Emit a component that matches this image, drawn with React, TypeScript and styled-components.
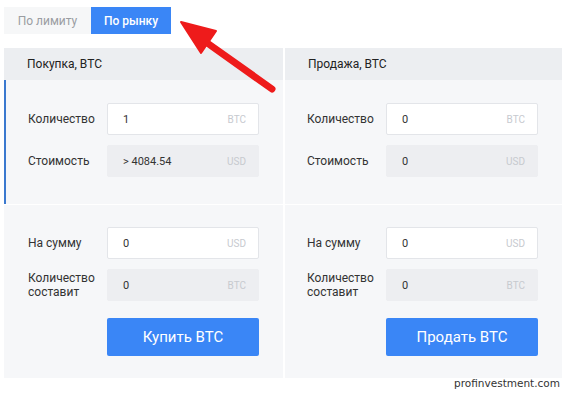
import React from 'react';
import styled, { createGlobalStyle } from 'styled-components';

const GlobalStyle = createGlobalStyle`
  html, body {
    margin: 0;
    padding: 0;
    background: #ffffff;
  }
  body {
    font-family: Roboto, "Noto Sans", "Liberation Sans", sans-serif;
    color: #2b2b2b;
  }
`;

interface Field {
  label: string;
  value: string;
  unit: string;
  disabled?: boolean;
}

interface Side {
  title: string;
  top: Field[];
  bottom: Field[];
  action: string;
  active?: boolean;
}

const sides: Side[] = [
  {
    title: 'Покупка, BTC',
    active: true,
    top: [
      { label: 'Количество', value: '1', unit: 'BTC' },
      { label: 'Стоимость', value: '> 4084.54', unit: 'USD', disabled: true },
    ],
    bottom: [
      { label: 'На сумму', value: '0', unit: 'USD' },
      { label: 'Количество составит', value: '0', unit: 'BTC', disabled: true },
    ],
    action: 'Купить BTC',
  },
  {
    title: 'Продажа, BTC',
    top: [
      { label: 'Количество', value: '0', unit: 'BTC' },
      { label: 'Стоимость', value: '0', unit: 'USD', disabled: true },
    ],
    bottom: [
      { label: 'На сумму', value: '0', unit: 'USD' },
      { label: 'Количество составит', value: '0', unit: 'BTC', disabled: true },
    ],
    action: 'Продать BTC',
  },
];

const App = () => {
  return (
    <Page>
      <GlobalStyle />
      <Tabs>
        <Tab>По лимиту</Tab>
        <Tab isActive>По рынку</Tab>
      </Tabs>

      <Panel>
        {sides.map((side) => (
          <Column key={side.title}>
            <ColumnHeader>{side.title}</ColumnHeader>
            <Section isActive={side.active} hasAccent={side.active}>
              {side.top.map((f) => (
                <FieldRow key={f.label} field={f} />
              ))}
            </Section>
            <Section isBottom hasAccent={side.active}>
              {side.bottom.map((f) => (
                <FieldRow key={f.label} field={f} />
              ))}
              <ActionRow>
                <Spacer />
                <ActionButton>{side.action}</ActionButton>
              </ActionRow>
            </Section>
          </Column>
        ))}
      </Panel>

      <Watermark>profinvestment.com</Watermark>

      {/* красная стрелка поверх страницы */}
      <Arrow width="573" height="394" viewBox="0 0 573 394">
        <line x1="272" y1="89" x2="203" y2="40" stroke="#ee1b1b" strokeWidth="7" strokeLinecap="round" />
        <polygon points="181,22 216,31 201,53" fill="#ee1b1b" stroke="#ee1b1b" strokeWidth="2" strokeLinejoin="round" />
      </Arrow>
    </Page>
  );
};

const FieldRow = ({ field }: { field: Field }) => (
  <Row>
    <Label>{field.label}</Label>
    <InputBox disabled={field.disabled}>
      <Value>{field.value}</Value>
      <Unit>{field.unit}</Unit>
    </InputBox>
  </Row>
);

export default App;

const Page = styled.div`
  position: relative;
  width: 573px;
  height: 394px;
  padding: 7px 0 0 4px;
  box-sizing: border-box;
  overflow: hidden;
`;

const Tabs = styled.div`
  display: flex;
  height: 27px;
`;

const Tab = styled.div<{ isActive?: boolean }>`
  display: flex;
  align-items: center;
  justify-content: center;
  width: ${({ isActive }) => (isActive ? '80px' : '87px')};
  font-size: 12px;
  font-weight: ${({ isActive }) => (isActive ? 500 : 400)};
  color: ${({ isActive }) => (isActive ? '#ffffff' : '#9a9da2')};
  background: ${({ isActive }) => (isActive ? '#3a86f6' : '#f6f7f8')};
`;

const Panel = styled.div`
  display: grid;
  grid-template-columns: 279px 277px;
  gap: 2px;
  margin-top: 14px;
  width: 558px;
`;

const Column = styled.div`
  display: flex;
  flex-direction: column;
  background: #f6f7f9;
`;

const ColumnHeader = styled.div`
  height: 32px;
  display: flex;
  align-items: center;
  padding-left: 23px;
  background: #eceef1;
  font-size: 12px;
  color: #222;
`;

const Section = styled.div<{ isActive?: boolean; isBottom?: boolean; hasAccent?: boolean }>`
  display: flex;
  flex-direction: column;
  gap: 10px;
  padding: ${({ isBottom }) => (isBottom ? '22px 0 22px 0' : '23px 0 27px 0')};
  padding-left: ${({ hasAccent }) => (hasAccent ? '2px' : '0')};
  border-top: ${({ isBottom }) => (isBottom ? '1px solid #ffffff' : 'none')};
  box-shadow: ${({ isActive }) => (isActive ? 'inset 2px 0 0 #3b79cf' : 'none')};
`;

const Row = styled.div`
  display: grid;
  grid-template-columns: 79px 152px;
  align-items: center;
  padding-left: 22px;
`;

const Label = styled.div`
  font-size: 12px;
  line-height: 14px;
  color: #333;
  padding-right: 6px;
`;

const InputBox = styled.div<{ disabled?: boolean }>`
  height: 32px;
  box-sizing: border-box;
  display: flex;
  align-items: center;
  justify-content: space-between;
  padding: 0 12px 0 15px;
  background: ${({ disabled }) => (disabled ? '#edeef1' : '#ffffff')};
  border: 1px solid ${({ disabled }) => (disabled ? '#edeef1' : '#e3e5e9')};
  border-radius: 2px;
`;

const Value = styled.span`
  font-size: 11px;
  color: #333;
`;

const Unit = styled.span`
  font-size: 10px;
  color: #c7cacf;
`;

const ActionRow = styled.div`
  display: grid;
  grid-template-columns: 79px 152px;
  padding-left: 22px;
  margin-top: 7px;
`;

const Spacer = styled.div``;

const ActionButton = styled.div`
  height: 38px;
  display: flex;
  align-items: center;
  justify-content: center;
  background: #3a86f6;
  border-radius: 2px;
  color: #ffffff;
  font-size: 15px;
  font-weight: 400;
`;

const Watermark = styled.div`
  width: 558px;
  text-align: right;
  margin-top: -1px;
  padding-right: 2px;
  box-sizing: border-box;
  font-family: "DejaVu Sans", Verdana, sans-serif;
  font-size: 10.5px;
  color: #333;
`;

const Arrow = styled.svg`
  position: absolute;
  top: 0;
  left: 0;
  pointer-events: none;
`;
